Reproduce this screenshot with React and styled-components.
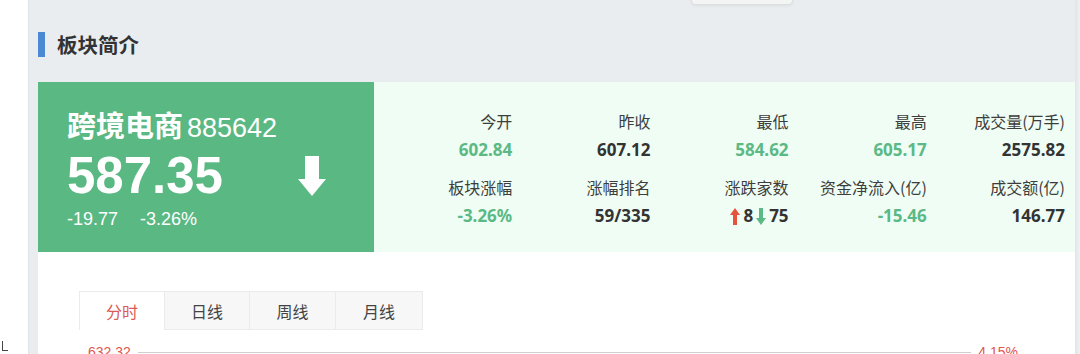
import React from 'react';
import styled, { createGlobalStyle } from 'styled-components';

const GlobalStyle = createGlobalStyle`
  html, body {
    margin: 0;
    padding: 0;
    background: #fff;
    overflow: hidden;
  }
  body {
    font-family: "Noto Sans", "Noto Sans CJK SC", sans-serif;
  }
`;

const GREEN = '#5bb985';
const RED = '#e5533d';

const stats = [
  { label: '今开', value: '602.84', color: GREEN },
  { label: '昨收', value: '607.12' },
  { label: '最低', value: '584.62', color: GREEN },
  { label: '最高', value: '605.17', color: GREEN },
  { label: '成交量(万手)', value: '2575.82' },
  { label: '板块涨幅', value: '-3.26%', color: GREEN },
  { label: '涨幅排名', value: '59/335' },
  { label: '涨跌家数', updown: true },
  { label: '资金净流入(亿)', value: '-15.46', color: GREEN },
  { label: '成交额(亿)', value: '146.77' }
];

const tabs = ['分时', '日线', '周线', '月线'];

const Page = styled.div`
  display: flex;
  width: 1080px;
  height: 354px;
  overflow: hidden;
`;

const Gutter = styled.div`
  width: 28px;
  flex-shrink: 0;
  display: flex;
  flex-direction: column;
  justify-content: flex-end;
  background: #fff;
`;

const CornerMark = styled.div`
  width: 5px;
  height: 9px;
  margin: 0 0 3px 2px;
  border-left: 1px solid #444;
  border-bottom: 1px solid #444;
`;

const Main = styled.div`
  position: relative;
  flex: 1;
  display: flex;
  flex-direction: column;
  background: #e9edef;
  border-left: 1px solid #e1e4e6;
  padding-left: 9px;
`;

const ScrollEdge = styled.div`
  width: 5px;
  flex-shrink: 0;
  background: linear-gradient(to right, #e2e4e6, #f0f1f2);
`;

const PopBottom = styled.div`
  position: absolute;
  top: -10px;
  left: 662px;
  width: 100px;
  height: 13px;
  background: #f3f4f4;
  border: 1px solid #dedfe0;
  border-radius: 4px;
  box-shadow: 0 1px 3px rgba(0, 0, 0, 0.06);
`;

const Header = styled.div`
  height: 82px;
  flex-shrink: 0;
  display: flex;
  align-items: center;
  padding-top: 6px;
  box-sizing: border-box;
`;

const HeaderBar = styled.span`
  width: 7px;
  height: 25px;
  background: #4a8ad4;
  margin-right: 12px;
`;

const HeaderTitle = styled.h2`
  margin: 0;
  font-family: "Noto Sans CJK SC", sans-serif;
  font-size: 20.5px;
  font-weight: 700;
  color: #333;
`;

const Card = styled.div`
  display: flex;
  height: 170px;
  flex-shrink: 0;
`;

const QuotePanel = styled.div`
  width: 336px;
  flex-shrink: 0;
  background: #5ab883;
  color: #fff;
  padding: 24px 0 0 29px;
  box-sizing: border-box;
  font-family: "Liberation Sans", Arial, "Noto Sans CJK SC", sans-serif;
`;

const NameRow = styled.div`
  display: flex;
  align-items: baseline;
  height: 36px;
`;

const Name = styled.span`
  font-family: "Noto Sans CJK SC", sans-serif;
  font-size: 29px;
  font-weight: 700;
  line-height: 36px;
  margin-right: 4px;
`;

const Code = styled.span`
  font-size: 27px;
  line-height: 36px;
`;

const PriceRow = styled.div`
  display: flex;
  align-items: center;
  height: 58px;
  margin-top: 5px;
`;

const Price = styled.span`
  font-size: 51px;
  font-weight: 700;
  line-height: 58px;
  width: 231px;
`;

const ChangeRow = styled.div`
  display: flex;
  gap: 22px;
  font-size: 18px;
  line-height: 24px;
  margin-top: 2px;
`;

const StatsPanel = styled.div`
  flex: 1;
  background: #effdf4;
  display: grid;
  grid-template-columns: repeat(5, 1fr);
  row-gap: 15px;
  align-content: start;
  padding: 28px 10px 0 0;
`;

const Stat = styled.div`
  display: flex;
  flex-direction: column;
  align-items: flex-end;
`;

const StatLabel = styled.span`
  font-family: "Noto Sans CJK SC", sans-serif;
  font-size: 16px;
  line-height: 22px;
  color: #3d3d3d;
  margin-bottom: 7px;
`;

const StatValue = styled.span`
  display: flex;
  align-items: center;
  gap: 3px;
  font-size: 17px;
  font-weight: 700;
  line-height: 22px;
  color: ${p => p.color || '#333'};
`;

const ChartArea = styled.div`
  flex: 1;
  background: #fff;
  padding: 39px 0 0 41px;
`;

const TabBar = styled.div`
  display: flex;
`;

const Tab = styled.div`
  width: ${p => p.width}px;
  height: 39px;
  box-sizing: border-box;
  display: flex;
  align-items: center;
  justify-content: center;
  font-family: "Noto Sans CJK SC", sans-serif;
  font-size: 16px;
  color: ${p => (p.active ? '#dc5a55' : '#444')};
  background: ${p => (p.active ? '#fff' : '#f7f7f7')};
  border: 1px solid #ebebeb;
  border-bottom: ${p => (p.active ? 'none' : '1px solid #ebebeb')};
  border-left: ${p => (p.first ? '1px solid #ebebeb' : 'none')};
`;

const AxisRow = styled.div`
  display: flex;
  align-items: center;
  margin: 14px 0 0 9px;
  width: 930px;
  color: #e0574f;
  font-family: "Liberation Sans", Arial, sans-serif;
  font-size: 14px;
  line-height: 16px;
`;

const AxisLine = styled.div`
  flex: 1;
  height: 1px;
  background: #cfcfcf;
  margin: 0 7px 0 7px;
`;

const BigArrow = () => (
  <svg width="28" height="40" viewBox="0 0 28 40">
    <path d="M7 0h14v23h7L14 40 0 23h7z" fill="#fff" />
  </svg>
);

const SmallArrow = ({ up, color }) => (
  <svg width="10" height="17" viewBox="0 0 10 17" style={{ transform: up ? 'none' : 'rotate(180deg)' }}>
    <path d="M5 0l5 7H7v10H3V7H0z" fill={color} />
  </svg>
);

const App = () => (
  <Page>
    <GlobalStyle />
    <Gutter>
      <CornerMark />
    </Gutter>
    <Main>
      <PopBottom />
      <Header>
        <HeaderBar />
        <HeaderTitle>板块简介</HeaderTitle>
      </Header>
      <Card>
        <QuotePanel>
          <NameRow>
            <Name>跨境电商</Name>
            <Code>885642</Code>
          </NameRow>
          <PriceRow>
            <Price>587.35</Price>
            <BigArrow />
          </PriceRow>
          <ChangeRow>
            <span>-19.77</span>
            <span>-3.26%</span>
          </ChangeRow>
        </QuotePanel>
        <StatsPanel>
          {stats.map(s => (
            <Stat key={s.label}>
              <StatLabel>{s.label}</StatLabel>
              {s.updown ? (
                <StatValue>
                  <SmallArrow up color={RED} />
                  8
                  <SmallArrow color={GREEN} />
                  75
                </StatValue>
              ) : (
                <StatValue color={s.color}>{s.value}</StatValue>
              )}
            </Stat>
          ))}
        </StatsPanel>
      </Card>
      <ChartArea>
        <TabBar>
          {tabs.map((t, i) => (
            <Tab key={t} active={i === 0} first={i === 0} width={[86, 85, 86, 87][i]}>
              {t}
            </Tab>
          ))}
        </TabBar>
        <AxisRow>
          <span>632.32</span>
          <AxisLine />
          <span>4.15%</span>
        </AxisRow>
      </ChartArea>
    </Main>
    <ScrollEdge />
  </Page>
);

export default App;
